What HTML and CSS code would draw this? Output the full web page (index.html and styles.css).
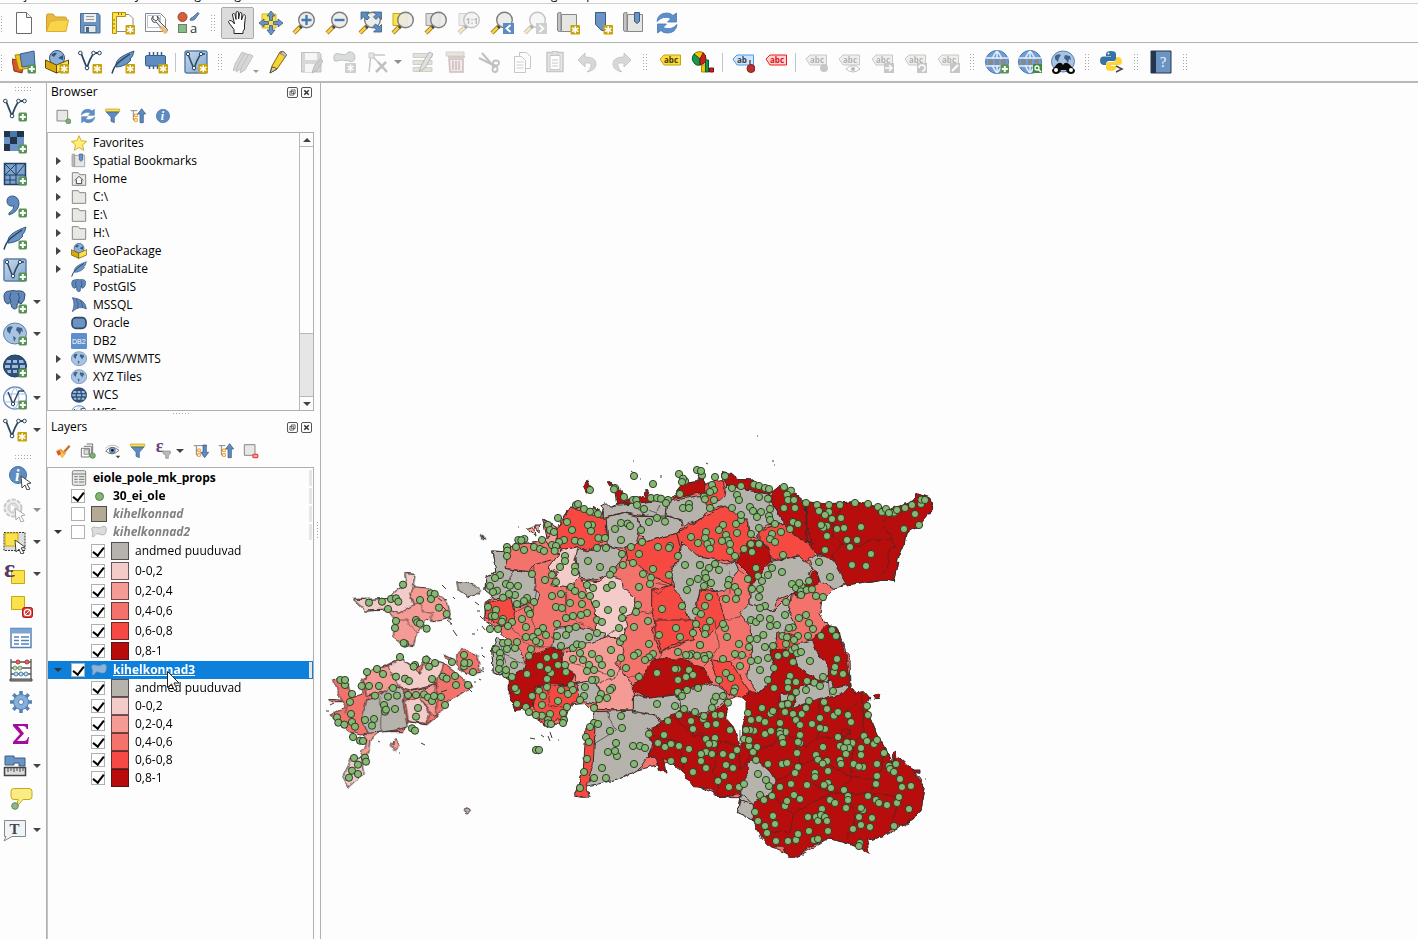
FILE: index.html
```html
<!DOCTYPE html>
<html lang="en">
<head>
<meta charset="utf-8">
<title>QGIS</title>
<link rel="stylesheet" href="styles.css">
</head>
<body>
<svg class="defs" aria-hidden="true">
<defs>
<marker id="pt" markerUnits="userSpaceOnUse" markerWidth="30" markerHeight="30" viewBox="-15 -15 30 30"><circle r="10.8" fill="#86b773" stroke="#2c3b28" stroke-width="3"/></marker>
<filter id="rough" x="-2%" y="-2%" width="104%" height="104%"><feTurbulence type="fractalNoise" baseFrequency=".13" numOctaves="2" seed="4"/><feDisplacementMap in="SourceGraphic" scale="5" xChannelSelector="R" yChannelSelector="G"/></filter>
<linearGradient id="steel" x1="0" y1="0" x2="1" y2="1"><stop offset="0" stop-color="#c7daec"/><stop offset="1" stop-color="#7fa3cc"/></linearGradient>
</defs>
</svg>
<svg class="symbols" aria-hidden="true">
<symbol id="plus" viewBox="0 0 24 24"><rect x="15.500" y="14.500" width="8.500" height="9" rx="1.500" fill="#5a9455"/><path d="M19.800 16v6M16.800 19h6" stroke="#fff" stroke-width="2"/></symbol>
<symbol id="star" viewBox="0 0 24 24"><rect x="14.500" y="14" width="9.500" height="9.500" rx="1" fill="#c8a208"/><path d="M19.200 15.300v7M16 17l6.400 3.600M22.400 17 16 20.600" stroke="#fff" stroke-width="1.600"/></symbol>
<symbol id="new" viewBox="0 0 24 24"><path d="M4.500 1.500h10l5 5v16h-15z" fill="#fff" stroke="#6b6b6b"/><path d="M14.500 1.500v5h5" fill="#eee" stroke="#6b6b6b"/></symbol>
<symbol id="open" viewBox="0 0 24 24"><path d="M1.500 20V4.500q0-1.500 1.500-1.500h5l2.500 3H20q1.500 0 1.500 2v3" fill="#e9bb3d" stroke="#c99c28"/><path d="M1.500 20.500 5 10.500l8-1.500h10.500l-2.500 11.500z" fill="#f9d44b" stroke="#d9ae34"/></symbol>
<symbol id="save" viewBox="0 0 24 24"><path d="M2.500 2.500h18l1.500 2v17.500h-19.500z" fill="#6b94c4" stroke="#4a6c94"/><path d="M6 3h12v8H6z" fill="#eef0f0"/><path d="M8 5.500h8M8 8.500h8" stroke="#999"/><path d="M6 14.500h12v7H6z" fill="#dfe6ec" stroke="#51718f"/><path d="M8 16h3v5H8z" fill="#4a6584"/></symbol>
<symbol id="layout" viewBox="0 0 24 24"><path d="M4 3.500h14l4 4v13H4z" fill="#fff" stroke="#888"/><path d="M1.500 1.500h13v4h-9v17h-4z" fill="#fbe24a" stroke="#b58f0b"/><path d="M7.500 2v2M10.500 2v2M2 9h2M2 13h2M2 17h2" stroke="#8d7314"/><use href="#star"/></symbol>
<symbol id="mgr" viewBox="0 0 24 24"><path d="M1.500 2.500h15l5 5v13h-20z" fill="#fff" stroke="#888"/><path d="M3.500 4.500h13v12h-13z" fill="none" stroke="#b5c7da"/><path d="M9 5q-3 3 0 6 2 1 3 0l8 9q2 2 3 0t-1-3l-7-7q1-4-2-5l1 3-2 2-3-2z" fill="#eee" stroke="#555"/><path d="m17 16 5.500 6" stroke="#edbb6c" stroke-width="4"/></symbol>
<symbol id="style" viewBox="0 0 24 24"><circle cx="5.500" cy="6" r="4.500" fill="#d2603c" stroke="#a84325"/><path d="M13 9q0-2 3-3l5-4.500 1 1L18 8q-2 2-5 1z" fill="#6b94c4" stroke="#4a6c94"/><rect x="1.500" y="13.500" width="8" height="8" fill="#8cb98b" stroke="#5d8a5c"/><text x="13" y="22" font-size="13" fill="#333" font-family="Open Sans">a</text></symbol>
<symbol id="hand" viewBox="0 0 24 24"><path d="M8 22.500v-4L3 12q-1-2 .5-2.500T7 11l1.500 2L6.500 4q0-1.500 1-1.500T9 3.500l1 5V2q0-1.500 1.300-1.500T12.600 2v6l1-5.500q.3-1.300 1.300-1t1 1.500l-.4 6 1.500-4.500q.6-1.200 1.600-.7t.8 1.700L18.500 14v4l-1.500 2.500v2z" fill="#fff" stroke="#222"/></symbol>
<symbol id="pan" viewBox="0 0 24 24"><path d="M3 3h14v14H3z" fill="#fbe24a" stroke="#d8b418"/><path d="M12 0 8 5h2.500v4.500h3V5H16zM12 24l-4-5h2.500v-4.500h3V19H16zM0 12l5-4v2.500h4.500v3H5V16zM24 12l-5-4v2.500h-4.500v3H19V16z" fill="#6b94c4" stroke="#385d87" stroke-width=".8"/></symbol>
<symbol id="lens" viewBox="0 0 24 24"><path d="M9 15 2 22" stroke="#8b6a1d" stroke-width="4"/><path d="M8.500 15.500 2 22" stroke="#fbd23e" stroke-width="2.500"/><path d="m8 17 2.500-3" stroke="#444" stroke-width="3"/><circle cx="14.500" cy="9" r="7.800" fill="#e9ebe8" fill-opacity=".88" stroke="#7d7d7d" stroke-width="1.400"/></symbol>
<symbol id="zin" viewBox="0 0 24 24"><use href="#lens"/><path d="M14.500 4v10M9.500 9h10" stroke="#4478b0" stroke-width="2.400"/></symbol>
<symbol id="zout" viewBox="0 0 24 24"><use href="#lens"/><path d="M9.500 9h10" stroke="#4478b0" stroke-width="2.400"/></symbol>
<symbol id="zfull" viewBox="0 0 24 24"><use href="#lens"/><path d="M3 1h8L8.500 3.500 11.500 6.500 9 9 5.500 6 3 8.500zM23.500 1h-8L18 3.500 15.500 6 18 8.500l3-3 2.500 3zM23.500 21h-8l2.500-2.500-3-3 2.500-2.500 3.500 3 2.500-2.500z" fill="#5e8cc0" stroke="#385d87" stroke-width=".8"/></symbol>
<symbol id="zsel" viewBox="0 0 24 24"><path d="M2 2.500h14v12H2z" fill="#fbe24a" stroke="#c9a619"/><use href="#lens"/></symbol>
<symbol id="zlay" viewBox="0 0 24 24"><path d="M2 2.500h14v12H2z" fill="#ddd" stroke="#999"/><use href="#lens"/></symbol>
<symbol id="znat" viewBox="0 0 24 24"><path d="M2 2.500h14v12H2z" fill="#ddd" stroke="#999"/><use href="#lens"/><text x="8.500" y="12.500" font-size="9" font-weight="700" fill="#666" font-family="Open Sans">1:1</text></symbol>
<symbol id="zlast" viewBox="0 0 24 24"><use href="#lens"/><path d="M13 12h11v11H13z" fill="#5e8cc0"/><path d="m20.500 14-4 3.500 4 3.500" fill="none" stroke="#fff" stroke-width="1.800"/></symbol>
<symbol id="znext" viewBox="0 0 24 24"><use href="#lens"/><path d="M13 12h11v11H13z" fill="#999"/><path d="m16.500 14 4 3.500-4 3.500" fill="none" stroke="#fff" stroke-width="1.800"/></symbol>
<symbol id="book" viewBox="0 0 24 24"><path d="M1.500 3q0-1.500 2-1.500H5v19H3.500q-2 0-2-1.500z" fill="#c3c3c3" stroke="#888"/><path d="M5.500 3.500h15v17h-15z" fill="#e5e5e1" stroke="#888"/><path d="M12.500 1.500h5v9l-2.500 2-2.500-2z" fill="#6b94c4" stroke="#385d87"/></symbol>
<symbol id="view" viewBox="0 0 24 24"><path d="M1.500 3q0-1.500 2-1.500H5v19H3.500q-2 0-2-1.500z" fill="#c3c3c3" stroke="#888"/><path d="M5.500 3.500h15v17h-15z" fill="#e5e5e1" stroke="#888"/><use href="#star"/></symbol>
<symbol id="bmk" viewBox="0 0 24 24"><path d="M6.500 1.500h10v18h-4l-6-6z" fill="#6b94c4" stroke="#385d87"/><use href="#star"/></symbol>
<symbol id="refresh" viewBox="0 0 24 24"><path d="M2 10.500Q3 2 12 2q4 0 6 2.500L21.500 2v9h-9L16 7.500Q8 4 2 10.500z" fill="#5e8fca" stroke="#4677ad" stroke-width=".8"/><path d="M22 13.500Q21 22 12 22q-4 0-6-2.500L2.500 22v-9h9L8 16.500q8 3.500 14-3z" fill="#5e8fca" stroke="#4677ad" stroke-width=".8"/></symbol>
<symbol id="dsm" viewBox="0 0 24 24"><path d="m0 9 12 2-2 12-8-2z" fill="#d2562a" stroke="#8c3412"/><path d="m3 5 13-1 1 14-10 2z" fill="#f2c31b" stroke="#a8830d"/><path d="m8 4 14-3 1 14-13 2z" fill="#6b94c4" stroke="#385d87"/><use href="#plus"/></symbol>
<symbol id="box" viewBox="0 0 24 24"><circle cx="12" cy="8" r="7.500" fill="#8cb0d8" stroke="#31547b"/><path d="M6 5q3-3 6-2l-3 4zM13 8l5-3v5z" fill="#31547b"/><path d="m.5 10 11 5v8L.5 18z" fill="#d9a90b" stroke="#5e4909"/><path d="m23.500 10-12 5v8l12-5z" fill="#fbe24a" stroke="#5e4909"/></symbol>
<symbol id="gpkg" viewBox="0 0 24 24"><use href="#box"/><use href="#star"/></symbol>
<symbol id="vec" viewBox="0 0 24 24"><path d="M3 3q3 8 6 15Q12 8 16 3h6" fill="none" stroke="#2b4661" stroke-width="1.800"/><g fill="#fff" stroke="#2b4661"><circle cx="2.300" cy="3" r="1.800"/><circle cx="9" cy="18" r="1.800"/><circle cx="15.500" cy="3" r="1.800"/><circle cx="21.500" cy="3" r="1.800"/></g></symbol>
<symbol id="feather" viewBox="0 0 24 24"><path d="M5 17Q4 10 12 6q5-3 11-5-1 6-4 8l1 1q-4 5-9 6-3 1-6 1z" fill="#6b94c4" stroke="#385d87"/><path d="M1 23.500Q3 16 8 12t11-8" fill="none" stroke="#28435f" stroke-width="1.500"/></symbol>
<symbol id="mem" viewBox="0 0 24 24"><path d="M5.500 2v17M9.500 2v17M13.500 2v17M17.500 2v17" stroke="#385d87" stroke-width="1.500"/><rect x="1.500" y="5.500" width="20" height="10.500" rx="1.500" fill="#5e8cc0" stroke="#385d87"/></symbol>
<symbol id="virt" viewBox="0 0 24 24"><rect x="1" y="1" width="22" height="22" rx="2" fill="url(#steel)" stroke="#5a7fa8" stroke-width="1.500"/><path d="M4 4q3 8 6 15Q13 9 17 4h4" fill="none" stroke="#2b4661" stroke-width="1.500"/><circle cx="4" cy="4" r="1.700" fill="#fff" stroke="#2b4661"/><circle cx="10" cy="18" r="1.700" fill="#fff" stroke="#2b4661"/><circle cx="17" cy="4" r="1.700" fill="#fff" stroke="#2b4661"/></symbol>
<symbol id="pencil" viewBox="0 0 24 24"><path d="M4 23 6 16 14 2q2-1.500 4 0t2.500 3L11 19z" fill="#f8d433" stroke="#7b641a"/><path d="M13.500 3.500q3 0 6 3.500l1-2.500L17 1.500z" fill="#c9ccd2" stroke="#777"/><path d="M4 23 6 17q3 0 5 2z" fill="#eac78a" stroke="#555"/></symbol>
<symbol id="pens" viewBox="0 0 24 24"><g fill="#aaa" stroke="#777"><path d="m0 21 2-7L9 2l4 2-8 14z"/><path d="m3 22 2-7 7-12 4 2-8 14z"/><path d="m7 23 2-7 7-12 4 2-8 14z"/></g></symbol>
<symbol id="sedit" viewBox="0 0 24 24"><path d="M2.500 2.500h18l1.500 2v17.500h-19.500z" fill="#aaa" stroke="#777"/><path d="M6 3h12v7H6zM6 14h9v8H6z" fill="#eee"/><path d="m13 23 2-6 6-8 3 2-6 9z" fill="#999" stroke="#666"/></symbol>
<symbol id="addf" viewBox="0 0 24 24"><path d="M2 9Q1 2 8 4t8-2q7-1 7 6-1 5-6 3-8-2-12 0-3 1-3-2z" fill="#a9bba7" stroke="#777"/><rect x="13" y="13" width="11" height="10" rx="1" fill="#999"/><path d="M18.500 14.500v7M15.500 16l6 4M21.500 16l-6 4" stroke="#fff" stroke-width="1.500"/></symbol>
<symbol id="vert" viewBox="0 0 24 24"><path d="M3 22 5 5h14M5 5l9 9" fill="none" stroke="#888" stroke-width="1.500"/><path d="M3 3h5v5H3z" fill="#ccc" stroke="#888"/><path d="m10 22 10-10M12 12l9 10" stroke="#777" stroke-width="2.500"/></symbol>
<symbol id="fields" viewBox="0 0 24 24"><path d="M2 3.500h19v4H2zM2 10.500h19v4H2zM2 17.500h19v4H2z" fill="#ccc28a" stroke="#999"/><path d="m8 22 2-6L18 2l4 2-8 14z" fill="#bbb" stroke="#666"/></symbol>
<symbol id="trash" viewBox="0 0 24 24"><path d="M2 2h18v4H2z" fill="#d2cba0" stroke="#a99"/><path d="M5 9h14v13H6zM4 7h17" fill="#f0d0cc" stroke="#b66" stroke-width="1.500"/><path d="M9 11v9M12 11v9M15 11v9" stroke="#b66" stroke-width="1.500"/></symbol>
<symbol id="cut" viewBox="0 0 24 24"><path d="m2 8 16 8M5 3l13 15" stroke="#777" stroke-width="2"/><ellipse cx="19" cy="13" rx="3" ry="2.500" fill="none" stroke="#777" stroke-width="1.800"/><ellipse cx="18" cy="19" rx="2.500" ry="3" fill="none" stroke="#777" stroke-width="1.800"/></symbol>
<symbol id="copy" viewBox="0 0 24 24"><path d="M9.500 2.500h7l4 4v12h-11z" fill="#fff" stroke="#888"/><path d="M4.500 6.500h7l4 4v12h-11z" fill="#fff" stroke="#888"/><path d="M6.500 12h7M6.500 15h7M6.500 18h7" stroke="#999"/></symbol>
<symbol id="paste" viewBox="0 0 24 24"><rect x="4" y="2.500" width="16" height="19" fill="#ccc" stroke="#888" stroke-width="1.500"/><path d="M7 5.500h10v14H7z" fill="#fff" stroke="#888"/><path d="M9 1.500h6v4H9zM9 10h6M9 13h6M9 16h6" fill="#bbb" stroke="#888"/></symbol>
<symbol id="undo" viewBox="0 0 24 24"><path d="m9 3-7 7 7 7v-4q7-1 6 3t-4 6q9-2 9-8 0-7-11-7z" fill="#aaa" stroke="#888"/></symbol>
<symbol id="redo" viewBox="0 0 24 24"><path d="m15 3 7 7-7 7v-4q-7-1-6 3t4 6q-9-2-9-8 0-7 11-7z" fill="#aaa" stroke="#888"/></symbol>
<symbol id="label" viewBox="0 0 24 24"><path d="m2 9 4-4h16.500v10H6z" fill="#fbdc3c" stroke="#c9a114"/><text x="6" y="13" font-size="8" font-weight="700" fill="#4b3b05" font-family="Open Sans">abc</text></symbol>
<symbol id="lred" viewBox="0 0 24 24"><path d="m2 9 4-4h16.500v10H6z" fill="#fbd3d3" stroke="#f01818"/><text x="6" y="13" font-size="8" font-weight="700" fill="#e01010" font-family="Open Sans">abc</text></symbol>
<symbol id="lpin" viewBox="0 0 24 24"><path d="m2 9 4-4h16.500v10H6z" fill="#cfe5fb" stroke="#4d9be6"/><text x="6" y="13" font-size="8" font-weight="700" fill="#34404d" font-family="Open Sans">ab</text><path d="M19 10v6" stroke="#777" stroke-width="2"/><circle cx="20" cy="18.500" r="4" fill="#b83330" stroke="#8d1f1c"/></symbol>
<symbol id="lgray" viewBox="0 0 24 24"><path d="m2 9 4-4h16.500v10H6z" fill="#dcdcd2" stroke="#888"/><text x="6" y="13" font-size="8" font-weight="700" fill="#555" font-family="Open Sans">abc</text></symbol>
<symbol id="diag" viewBox="0 0 24 24"><path d="M9 9 3 4q4-4 10-1z" fill="#f7c600" stroke="#8a6d00"/><path d="M9 9 3 4q-4 5 1 10 2 2 5 1z" fill="#18964a" stroke="#0b5a29"/><path d="M9 9v6q6-1 6-6t-3-6z" fill="#c8201c" stroke="#7d100e"/><path d="M10.500 15h4v7h-4z" fill="#f7c600" stroke="#a88800"/><path d="M14.500 10h3v12h-3z" fill="#18964a" stroke="#0b5a29"/><path d="M18.500 18h4v4h-4z" fill="#c8201c" stroke="#7d100e"/></symbol>
<symbol id="globe" viewBox="0 0 24 24"><circle cx="12" cy="12" r="11.500" fill="#6d9fdb" stroke="#4b77ad"/><path d="M1 8h22M1 16h22M12 1v22M12 1q-10 11 0 22M12 1q10 11 0 22" fill="none" stroke="#e7eef5" stroke-width="1.500"/><path d="M3 9h5v6H3zM10 9h4v6h-4zM16 9h5v6h-5z" fill="#888b8e"/></symbol>
<symbol id="gsearch" viewBox="0 0 24 24"><use href="#globe"/><path d="M15 14h9v9h-9z" fill="#3f8a3d"/><circle cx="19" cy="18" r="2" fill="none" stroke="#fff" stroke-width="1.300"/><path d="m20.500 19.500 2.500 2.500" stroke="#fff" stroke-width="1.500"/></symbol>
<symbol id="wms" viewBox="0 0 24 24"><ellipse cx="12" cy="11.500" rx="11.500" ry="10.500" fill="#a9c4e2" stroke="#5a7fa8"/><path d="M4 6q3-3 6-1l-2 3-1 4-3-3zM14 5l5 1 1 4-2-1-1 4-2-3-2-2zM10 14l3 2-2 4z" fill="#3f618a"/></symbol>
<symbol id="binoc" viewBox="0 0 24 24"><use href="#wms"/><path d="M6 14q4-3 6 1 2-4 6-1l6 6q0 4-4 4t-5-4h-5q-1 4-5 4t-4-4z" fill="#0a0a0a"/><circle cx="5" cy="20" r="2" fill="#fff"/><circle cx="20" cy="20" r="2" fill="#fff"/></symbol>
<symbol id="py" viewBox="0 0 24 24"><path d="M6 6V4q0-3 5-3t5 3v5q0 2-3 2H9q-3 0-3 4H3q-3-1-3-4.500T3 6.500h8V6z" fill="#3572a5"/><path d="M16 7h3q3 1 3 4.500T19 15h-8v1h5v2q0 3-5 3t-5-3v-3q0-3 3-3h4q3 0 3-4z" fill="#ffd43b"/><circle cx="8.500" cy="3.500" r="1" fill="#fff"/><path d="m16 16 6 3-6 3" fill="none" stroke="#444" stroke-width="1.500"/></symbol>
<symbol id="help" viewBox="0 0 24 24"><path d="M2 1h20v22H2z" fill="#6b94c4" stroke="#23384f"/><path d="M2 1h5v22H2z" fill="#23384f"/><text x="11" y="17" font-size="14" fill="#fff" font-family="Liberation Serif">?</text></symbol>
<symbol id="raster" viewBox="0 0 24 24"><path d="M1 1h20v20H1z" fill="#6b94c4"/><path d="M1 1h6v6H1zM14 1h7v6h-7zM7 7h7v7H7zM1 14h6v7H1z" fill="#20344a"/><path d="M7 1h7v6H7z" fill="#4a77ab"/></symbol>
<symbol id="mesh" viewBox="0 0 24 24"><path d="M1.500 1.500h21v21h-21z" fill="#7da3d0" stroke="#23415f" stroke-width="1.500"/><path d="M1 13h22M13 1v22M2 2l11 11M13 2 2 13M13 13 22 2M1 18h12M7 13v10" stroke="#23415f" fill="none"/></symbol>
<symbol id="comma" viewBox="0 0 24 24"><path d="M4 7q0-5 6-5 6 1 6 8-1 8-10 11v-2q5-3 5-7-7 1-7-5z" fill="#5e8cc0" stroke="#385d87"/></symbol>
<symbol id="eleph" viewBox="0 0 24 24"><path d="M1 6q0-5 6-5 3-1 6 0 9-1 9 4 0 6-4 9-2 0-2-3-1 3-2 4 1 4-3 4-3-1-3-5-1 0-1-2-1 2-2 2-4-1-4-8z" fill="#6088b8" stroke="#2f507a"/><path d="M8 3q-3 4 0 9M15 3q3 4 0 9" fill="none" stroke="#2f507a"/></symbol>
<symbol id="dglobe" viewBox="0 0 24 24"><ellipse cx="12" cy="12" rx="11.500" ry="11" fill="#2f507a" stroke="#23415f"/><path d="M4 6h4v3H3zM10 6h4v3h-4zM16 6h4l1 3h-5zM2 11h5v3H2zM9 11h6v3H9zM17 11h5v3h-5zM4 16h4v3H5zM10 16h4v3h-4zM16 16h4v3h-4z" fill="#9bbbdd"/></symbol>
<symbol id="wfs" viewBox="0 0 24 24"><ellipse cx="12" cy="12" rx="11.500" ry="11" fill="#fff" stroke="#6b94c4" stroke-width="1.500"/><path d="M1 8h22M1 16h22M12 1q-8 11 0 22M12 1q8 11 0 22" fill="none" stroke="#a3bfdf"/><path d="m5 6 5 12 6-13h5" fill="none" stroke="#2b4661" stroke-width="1.500"/><circle cx="10" cy="18" r="1.700" fill="#fff" stroke="#2b4661"/></symbol>
<symbol id="arrow" viewBox="0 0 24 24"><path d="m12 10 10 7-4 1 3 5-3 1-2-5-3 3z" fill="#fff" stroke="#444"/></symbol>
<symbol id="info" viewBox="0 0 24 24"><circle cx="9" cy="9" r="8.500" fill="#5e8cc0" stroke="#4273a9"/><text x="6" y="15" font-size="16" font-style="italic" font-weight="700" fill="#fff" font-family="Liberation Serif">i</text><use href="#arrow"/></symbol>
<symbol id="inf" viewBox="0 0 24 24"><circle cx="12" cy="12" r="10" fill="#5e8cc0" stroke="#4273a9"/><text x="8.500" y="18.500" font-size="18" font-style="italic" font-weight="700" fill="#fff" font-family="Liberation Serif">i</text></symbol>
<symbol id="gear" viewBox="0 0 24 24"><path d="M12 1v22M1 12h22M4.300 4.300l15.400 15.400M19.700 4.300 4.300 19.700" stroke="#5582b5" stroke-width="3.600"/><circle cx="12" cy="12" r="7.500" fill="#86aedb" stroke="#5582b5"/><circle cx="12" cy="12" r="2.500" fill="#fff" stroke="#5582b5"/></symbol>
<symbol id="action" viewBox="0 0 24 24"><circle cx="10" cy="10" r="8.500" fill="#ddd" stroke="#888" stroke-width="2" stroke-dasharray="4 1.500"/><circle cx="10" cy="10" r="5" fill="#bbb" stroke="#888"/><path d="m8 7 5 3-5 3z" fill="#fff"/><use href="#arrow"/></symbol>
<symbol id="sel" viewBox="0 0 24 24"><path d="M1 2.500h21v18H1z" fill="#ddd" stroke="#333" stroke-dasharray="2 1"/><path d="M2 3h13v13H2z" fill="#fbe24a" stroke="#c9a619"/><use href="#arrow"/></symbol>
<symbol id="eps" viewBox="0 0 24 24"><path d="M8.500 8.500h13v13h-13z" fill="#fbe24a" stroke="#c9a619"/><text x="1" y="15" font-size="26" font-weight="700" fill="#5a3a66" font-family="Liberation Serif">ε</text></symbol>
<symbol id="desel" viewBox="0 0 24 24"><path d="M2.500 2.500h13v13h-13z" fill="#fbe24a" stroke="#c9a619"/><rect x="13.500" y="13.500" width="10" height="10" rx="2" fill="#e03a34" stroke="#a51b17"/><circle cx="18.500" cy="18.500" r="3.200" fill="none" stroke="#fff" stroke-width="1.300"/><path d="m16 21 5-5" stroke="#fff"/></symbol>
<symbol id="table" viewBox="0 0 24 24"><path d="M2 2.500h20v19H2z" fill="#fff" stroke="#5582b5" stroke-width="1.500"/><path d="M2 2.500h20v5H2z" fill="#7ea5d2"/><path d="M5 11h5M12 11h8M5 14.500h5M12 14.500h8M5 18h5M12 18h8" stroke="#5582b5" stroke-width="1.500"/></symbol>
<symbol id="abacus" viewBox="0 0 24 24"><path d="M2 1v20M22 1v20M2 4h20M2 10h20M2 16h20" stroke="#555" stroke-width="1.300"/><path d="M1 21h22v2H1z" fill="#999" stroke="#444"/><g fill="#e66b62" stroke="#a33"><circle cx="9" cy="4" r="2"/><circle cx="18" cy="4" r="2"/></g><g fill="#bcd9b4" stroke="#6a9a62"><circle cx="6" cy="10" r="2"/><circle cx="11" cy="10" r="2"/></g><g fill="#c4dcef" stroke="#5582a5"><circle cx="7" cy="16" r="2"/><circle cx="12" cy="16" r="2"/><circle cx="17" cy="16" r="2"/></g></symbol>
<symbol id="sigma" viewBox="0 0 24 24"><path d="M4 2h15v5h-1.500q0-3-4-3H9l6 7.500L8 19h7q3 0 4-4h1l-1 7H4v-2l7-8-7-8z" fill="#a30c9d"/></symbol>
<symbol id="ruler" viewBox="0 0 24 24"><path d="M2 2h9v2h11v8h-6V9h-5v2H2z" fill="#6b94c4" stroke="#385d87"/><path d="M1.500 13.500h21v8h-21z" fill="#ddd" stroke="#444" stroke-width="1.500"/><path d="M5 14v4M8 14v3M11 14v4M14 14v3M17 14v4M20 14v3" stroke="#444"/></symbol>
<symbol id="tip" viewBox="0 0 24 24"><path d="M5 2.500h15q3 0 3 3v5q0 3-3 3h-6l-6 7 1-7H5q-3 0-3-3v-5q0-3 3-3z" fill="#faec84" stroke="#c9a619"/><circle cx="6" cy="20" r="3.300" fill="#8cb98b" stroke="#5d8a5c"/></symbol>
<symbol id="tann" viewBox="0 0 24 24"><path d="M1.500 2.500h21v16H9l-8 4.500 2-4.500H1.500z" fill="#eef4f8" stroke="#888"/><text x="6.500" y="15.500" font-size="15" font-weight="700" fill="#444" font-family="Liberation Serif">T</text></symbol>
<symbol id="addl" viewBox="0 0 24 24"><path d="M3 3.500h16v16H3z" fill="#e7e7e3" stroke="#888" stroke-width="1.500"/><circle cx="20" cy="20" r="3.800" fill="#7fae76" stroke="#4d7c46"/></symbol>
<symbol id="reml" viewBox="0 0 24 24"><path d="M2 2.500h16v16H2z" fill="#e7e7e3" stroke="#888" stroke-width="1.500"/><rect x="14" y="16" width="9" height="7" rx="2" fill="#ea4a4a"/><path d="M16 19.500h5" stroke="#fff" stroke-width="1.500"/></symbol>
<symbol id="filter" viewBox="0 0 24 24"><path d="M1 1.500h21v4H1z" fill="#fbe24a" stroke="#b99818"/><path d="M2 6h19l-7 8v8l-5-2v-6z" fill="#5e8cc0" stroke="#385d87"/></symbol>
<symbol id="coll" viewBox="0 0 24 24"><path d="M1 4h10M5 4v14M5 11h4M5 18h4" fill="none" stroke="#888" stroke-width="1.500"/><path d="M7 9h4v4H7zM7 16h4v4H7z" fill="#fff" stroke="#f09a1f" stroke-width="1.500"/><path d="m17.500 1 6 8H20v13h-5V9h-3.500z" fill="#5e8cc0" stroke="#2f507a"/></symbol>
<symbol id="expd" viewBox="0 0 24 24"><path d="M1 4h20M5 4v14M5 11h4M5 18h4" fill="none" stroke="#888" stroke-width="1.500"/><path d="M7 9h4v4H7zM7 16h4v4H7z" fill="#fff" stroke="#f09a1f" stroke-width="1.500"/><path d="m17.500 22 6-8H20V3h-5v11h-3.500z" fill="#5e8cc0" stroke="#2f507a"/></symbol>
<symbol id="brush" viewBox="0 0 24 24"><path d="m2 12 6-3 8 6-5 7z" fill="#f8c93c" stroke="#e0a23a"/><path d="m2 13 5-2 2 5-4 3z" fill="#e0503a"/><path d="m14 13 8-9" stroke="#c3722b" stroke-width="3.500"/><path d="m8 10 7 6" stroke="#e9a04a" stroke-width="3"/></symbol>
<symbol id="grp" viewBox="0 0 24 24"><path d="M2 8h12v13H2zM6 5h11v12M10 1.500h9v14" fill="none" stroke="#777" stroke-width="1.500"/><path d="M6 17V10h7v7z" fill="#ddd" stroke="#777"/><circle cx="19" cy="19" r="4" fill="#7fae76" stroke="#4d7c46"/></symbol>
<symbol id="eye" viewBox="0 0 24 24"><path d="M1 12Q10 2 21 11q-10 10-20 1z" fill="#fff" stroke="#777" stroke-width="1.500"/><circle cx="11" cy="11" r="4.500" fill="#7fa3cc" stroke="#31547b"/><circle cx="11" cy="11" r="2" fill="#111"/><path d="M1 8Q10-1 21 7" fill="none" stroke="#999"/><path d="M16 19h7l-3.500 4z" fill="#444"/></symbol>
<symbol id="efil" viewBox="0 0 24 24"><text x="1" y="14" font-size="27" font-weight="700" fill="#6b4478" font-family="Liberation Serif">ε</text><path d="M12 12h11v4l-3 2v5h-4v-5l-4-2z" fill="#bbb" stroke="#888"/></symbol>
<symbol id="fav" viewBox="0 0 24 24"><path d="m12 1 3.300 7.700 8.200.8-6.200 5.400 1.900 8.100-7.200-4.200L4.800 23l1.900-8.100L.5 9.500l8.200-.8z" fill="#fdf07a" stroke="#c9a619" stroke-width="1.300"/></symbol>
<symbol id="dir" viewBox="0 0 24 24"><path d="M2 21.500v-19h9l2 3h9v16z" fill="#e8e8e5" stroke="#888" stroke-width="1.500"/></symbol>
<symbol id="home" viewBox="0 0 24 24"><use href="#dir"/><path d="m6 14 6-6 6 6M8 13v6h8v-6" fill="#fff" stroke="#444" stroke-width="1.500"/></symbol>
<symbol id="mssql" viewBox="0 0 24 24"><path d="M2 1q20 2 21 17-10-6-21 4 5-12 0-21z" fill="#6088b8" stroke="#2f507a"/><path d="M8 3q4 7 2 14M14 5q4 6 3 11" fill="none" stroke="#2f507a"/></symbol>
<symbol id="ora" viewBox="0 0 24 24"><rect x="1.500" y="4" width="21" height="16" rx="6" fill="#6b94c4" stroke="#2f4a68" stroke-width="2.500"/></symbol>
<symbol id="db2" viewBox="0 0 24 24"><rect x="0" y="0" width="24" height="24" rx="2" fill="#5e8fca"/><text x="1.500" y="16" font-size="10.500" fill="#fff" font-family="Liberation Sans">DB2</text></symbol>
<symbol id="tbl" viewBox="0 0 24 24"><rect x="2" y="1" width="20" height="22" rx="2" fill="#e8e8e5" stroke="#888" stroke-width="1.500"/><path d="M2 6h20M5 10h5M12 10h8M5 14h5M12 14h8M5 18h5M12 18h8" stroke="#777" stroke-width="1.500"/></symbol>
<symbol id="poly" viewBox="0 0 24 24"><path d="M2 18Q4 13 1 8q0-5 6-3t10-1q6-2 6 4t-3 8q-4 1-8-1t-6 2q-4 4-4 1z" fill="currentColor" stroke="#999"/></symbol>
</svg>

<nav class="menubar" aria-label="Main menu"><button>Project</button><button>Edit</button><button>View</button><button>Layer</button><button>Settings</button><button>Plugins</button><button>Vector</button><button>Raster</button><button>Database</button><button>Web</button><button>Mesh</button><button>Processing</button><button>Help</button></nav>

<div class="toolbar" role="toolbar" aria-label="Project and navigation">
<button aria-label="New project"><svg><use href="#new"/></svg></button><button aria-label="Open project"><svg><use href="#open"/></svg></button><button aria-label="Save project"><svg><use href="#save"/></svg></button><button aria-label="New print layout"><svg><use href="#layout"/></svg></button><button aria-label="Layout manager"><svg><use href="#mgr"/></svg></button><button aria-label="Style manager"><svg><use href="#style"/></svg></button>
<i class="grip"></i>
<button class="pressed" aria-label="Pan map"><svg><use href="#hand"/></svg></button><button aria-label="Pan to selection"><svg><use href="#pan"/></svg></button><button aria-label="Zoom in"><svg><use href="#zin"/></svg></button><button aria-label="Zoom out"><svg><use href="#zout"/></svg></button><button aria-label="Zoom full"><svg><use href="#zfull"/></svg></button><button aria-label="Zoom to selection"><svg><use href="#zsel"/></svg></button><button aria-label="Zoom to layer"><svg><use href="#zlay"/></svg></button><button class="off" aria-label="Zoom to native resolution"><svg><use href="#znat"/></svg></button><button aria-label="Zoom last"><svg><use href="#zlast"/></svg></button><button class="off" aria-label="Zoom next"><svg><use href="#znext"/></svg></button><button aria-label="New map view"><svg><use href="#view"/></svg></button><button aria-label="New bookmark"><svg><use href="#bmk"/></svg></button><button aria-label="Show bookmarks"><svg><use href="#book"/></svg></button><button aria-label="Refresh"><svg><use href="#refresh"/></svg></button>
</div>

<div class="toolbar second" role="toolbar" aria-label="Layers and editing">
<button aria-label="Data source manager"><svg><use href="#dsm"/></svg></button><button aria-label="New GeoPackage layer"><svg><use href="#gpkg"/></svg></button><button aria-label="New shapefile layer"><svg><use href="#vec"/><use href="#star"/></svg></button><button aria-label="New SpatiaLite layer"><svg><use href="#feather"/><use href="#star"/></svg></button><button aria-label="New temporary layer"><svg><use href="#mem"/><use href="#star"/></svg></button>
<i class="sep"></i>
<button aria-label="New virtual layer"><svg><use href="#virt"/><use href="#star"/></svg></button>
<i class="grip"></i>
<button class="off drop-in" aria-label="Current edits"><svg><use href="#pens"/></svg></button><button aria-label="Toggle editing"><svg><use href="#pencil"/></svg></button><button class="off" aria-label="Save edits"><svg><use href="#sedit"/></svg></button><button class="off" aria-label="Add feature"><svg><use href="#addf"/></svg></button><button class="off wide" aria-label="Vertex tool"><svg><use href="#vert"/></svg><i class="down"></i></button><button class="off" aria-label="Modify attributes"><svg><use href="#fields"/></svg></button><button class="off" aria-label="Delete selected"><svg><use href="#trash"/></svg></button><button class="off" aria-label="Cut"><svg><use href="#cut"/></svg></button><button class="off" aria-label="Copy"><svg><use href="#copy"/></svg></button><button class="off" aria-label="Paste"><svg><use href="#paste"/></svg></button><button class="off" aria-label="Undo"><svg><use href="#undo"/></svg></button><button class="off" aria-label="Redo"><svg><use href="#redo"/></svg></button>
<i class="grip"></i>
<button aria-label="Layer labeling"><svg><use href="#label"/></svg></button><button aria-label="Layer diagram"><svg><use href="#diag"/></svg></button>
<i class="sep"></i>
<button aria-label="Highlight pinned labels"><svg><use href="#lpin"/></svg></button><button aria-label="Unplaced labels"><svg><use href="#lred"/></svg></button>
<i class="sep"></i>
<button class="off" aria-label="Pin labels"><svg><use href="#lgray"/><circle cx="20" cy="18" r="4" fill="#888"/></svg></button><button class="off" aria-label="Show labels"><svg><use href="#lgray"/><path d="M9 19q7-7 14 0-7 6-14 0z" fill="#fff" stroke="#777"/><circle cx="16" cy="19" r="2" fill="#666"/></svg></button><button class="off" aria-label="Move label"><svg><use href="#lgray"/><rect x="14" y="13" width="10" height="10" fill="#888"/><path d="M15 18h7m-3-3 3 3-3 3" fill="none" stroke="#fff" stroke-width="1.500"/></svg></button><button class="off" aria-label="Rotate label"><svg><use href="#lgray"/><rect x="14" y="13" width="10" height="10" fill="#888"/><path d="M16 18q0-3 3-3t3 3-3 3" fill="none" stroke="#fff" stroke-width="1.500"/></svg></button><button class="off" aria-label="Change label"><svg><use href="#lgray"/><rect x="14" y="13" width="10" height="10" fill="#888"/><path d="m16 21 6-6" stroke="#fff" stroke-width="2"/></svg></button>
<i class="grip"></i>
<button aria-label="Add basemap"><svg><use href="#globe"/><use href="#plus"/></svg></button><button aria-label="Search services"><svg><use href="#gsearch"/></svg></button><button aria-label="Metasearch"><svg><use href="#binoc"/></svg></button>
<i class="grip"></i>
<button aria-label="Python console"><svg><use href="#py"/></svg></button>
<i class="grip"></i>
<button aria-label="Help contents"><svg><use href="#help"/></svg></button>
<i class="grip"></i>
</div>

<div class="workspace">
<div class="sidebar" role="toolbar" aria-label="Manage layers and attributes" aria-orientation="vertical">
<i class="hgrip first"></i>
<button aria-label="Add vector layer"><svg><use href="#vec"/><use href="#plus"/></svg></button>
<button aria-label="Add raster layer"><svg><use href="#raster"/><use href="#plus"/></svg></button>
<button aria-label="Add mesh layer"><svg><use href="#mesh"/><use href="#plus"/></svg></button>
<button aria-label="Add delimited text layer"><svg><use href="#comma"/><use href="#plus"/></svg></button>
<button aria-label="Add SpatiaLite layer"><svg><use href="#feather"/><use href="#plus"/></svg></button>
<button aria-label="Add virtual layer"><svg><use href="#virt"/><use href="#plus"/></svg></button>
<button aria-label="Add PostGIS layer"><svg><use href="#eleph"/><use href="#plus"/></svg><i class="down"></i></button>
<button aria-label="Add WMS layer"><svg><use href="#wms"/><use href="#plus"/></svg><i class="down"></i></button>
<button aria-label="Add WCS layer"><svg><use href="#dglobe"/><use href="#plus"/></svg></button>
<button aria-label="Add WFS layer"><svg><use href="#wfs"/><use href="#plus"/></svg><i class="down"></i></button>
<button aria-label="New layer"><svg><use href="#vec"/><use href="#star"/></svg><i class="down"></i></button>
<i class="hgrip"></i>
<button class="mid" aria-label="Identify features"><svg><use href="#info"/></svg></button>
<button class="off" aria-label="Run feature action"><svg><use href="#action"/></svg><i class="down"></i></button>
<button aria-label="Select features"><svg><use href="#sel"/></svg><i class="down"></i></button>
<button aria-label="Select by expression"><svg><use href="#eps"/></svg><i class="down"></i></button>
<button class="mid" aria-label="Deselect features"><svg><use href="#desel"/></svg></button>
<button class="mid" aria-label="Open attribute table"><svg><use href="#table"/></svg></button>
<button class="mid" aria-label="Field calculator"><svg><use href="#abacus"/></svg></button>
<button class="mid" aria-label="Processing toolbox"><svg><use href="#gear"/></svg></button>
<button class="mid" aria-label="Statistics"><svg><use href="#sigma"/></svg></button>
<button aria-label="Measure line"><svg><use href="#ruler"/></svg><i class="down"></i></button>
<button class="mid" aria-label="Map tips"><svg><use href="#tip"/></svg></button>
<button aria-label="Text annotation"><svg><use href="#tann"/></svg><i class="down"></i></button>
</div>

<div class="docks">
<section class="panel browser">
<header><h2>Browser</h2><button class="wb" aria-label="Float panel"><svg viewBox="0 0 12 12"><path d="M4.500 2.500h5v5h-5zM2.500 4.500h5v5h-5z" fill="#fff" stroke="#444"/></svg></button><button class="wb" aria-label="Close panel"><svg viewBox="0 0 12 12"><path d="m3 3 6 6M9 3 3 9" stroke="#333" stroke-width="2"/></svg></button></header>
<div class="ptools"><button aria-label="Add selected layers"><svg><use href="#addl"/></svg></button><button aria-label="Refresh browser"><svg><use href="#refresh"/></svg></button><button aria-label="Filter browser"><svg><use href="#filter"/></svg></button><button aria-label="Collapse all"><svg><use href="#coll"/></svg></button><button aria-label="Properties"><svg><use href="#inf"/></svg></button></div>
<div class="box scroller">
<ul class="tree">
<li><i class="tw"></i><svg><use href="#fav"/></svg>Favorites</li>
<li><i class="tw shut"></i><svg><use href="#book"/></svg>Spatial Bookmarks</li>
<li><i class="tw shut"></i><svg><use href="#home"/></svg>Home</li>
<li><i class="tw shut"></i><svg><use href="#dir"/></svg>C:\</li>
<li><i class="tw shut"></i><svg><use href="#dir"/></svg>E:\</li>
<li><i class="tw shut"></i><svg><use href="#dir"/></svg>H:\</li>
<li><i class="tw shut"></i><svg><use href="#box"/></svg>GeoPackage</li>
<li><i class="tw shut"></i><svg><use href="#feather"/></svg>SpatiaLite</li>
<li><i class="tw"></i><svg><use href="#eleph"/></svg>PostGIS</li>
<li><i class="tw"></i><svg><use href="#mssql"/></svg>MSSQL</li>
<li><i class="tw"></i><svg><use href="#ora"/></svg>Oracle</li>
<li><i class="tw"></i><svg><use href="#db2"/></svg>DB2</li>
<li><i class="tw shut"></i><svg><use href="#wms"/></svg>WMS/WMTS</li>
<li><i class="tw shut"></i><svg><use href="#wms"/></svg>XYZ Tiles</li>
<li><i class="tw"></i><svg><use href="#dglobe"/></svg>WCS</li>
<li><i class="tw"></i><svg><use href="#wfs"/></svg>WFS</li>
</ul>
<div class="bar"><button aria-label="Scroll up"><i class="up"></i></button><span class="track"></span><span class="thumb"></span><button aria-label="Scroll down"><i class="down"></i></button></div>
</div>
</section>
<i class="splitter"></i>
<section class="panel layers">
<header><h2>Layers</h2><button class="wb" aria-label="Float panel"><svg viewBox="0 0 12 12"><path d="M4.500 2.500h5v5h-5zM2.500 4.500h5v5h-5z" fill="#fff" stroke="#444"/></svg></button><button class="wb" aria-label="Close panel"><svg viewBox="0 0 12 12"><path d="m3 3 6 6M9 3 3 9" stroke="#333" stroke-width="2"/></svg></button></header>
<div class="ptools"><button aria-label="Open layer styling"><svg><use href="#brush"/></svg></button><button aria-label="Add group"><svg><use href="#grp"/></svg></button><button aria-label="Manage map themes"><svg><use href="#eye"/></svg></button><button aria-label="Filter legend"><svg><use href="#filter"/></svg></button><button class="more" aria-label="Filter by expression"><svg><use href="#efil"/></svg><i class="down"></i></button><button aria-label="Expand all"><svg><use href="#expd"/></svg></button><button aria-label="Collapse all"><svg><use href="#coll"/></svg></button><button aria-label="Remove layer"><svg><use href="#reml"/></svg></button></div>
<div class="box legend">
<ul class="tree">
<li class="bar-end"><i class="tw"></i><svg><use href="#tbl"/></svg><b>eiole_pole_mk_props</b></li>
<li class="bar-end"><i class="tw"></i><label><input type="checkbox" checked><i class="point"></i><b>30_ei_ole</b></label></li>
<li class="bar-end hidden-layer"><i class="tw"></i><label><input type="checkbox"><i class="sw tan"></i>kihelkonnad</label></li>
<li class="bar-end hidden-layer"><i class="tw opened"></i><label><input type="checkbox"><svg class="pale"><use href="#poly"/></svg>kihelkonnad2</label></li>
</ul>
<ul class="tree classes tall">
<li><label><input type="checkbox" checked><i class="sw c0"></i>andmed puuduvad</label></li>
<li><label><input type="checkbox" checked><i class="sw c1"></i>0-0,2</label></li>
<li><label><input type="checkbox" checked><i class="sw c2"></i>0,2-0,4</label></li>
<li><label><input type="checkbox" checked><i class="sw c3"></i>0,4-0,6</label></li>
<li><label><input type="checkbox" checked><i class="sw c4"></i>0,6-0,8</label></li>
<li><label><input type="checkbox" checked><i class="sw c5"></i>0,8-1</label></li>
</ul>
<ul class="tree">
<li class="bar-end current"><i class="tw opened"></i><label><input type="checkbox" checked><svg class="blue"><use href="#poly"/></svg><b>kihelkonnad3</b></label><svg class="cursor" viewBox="0 0 12 20"><path d="M.5.500v16l4-3.500 3 6.500 2.500-1.200-3-6.300h5z" fill="#fff" stroke="#222"/></svg></li>
</ul>
<ul class="tree classes">
<li><label><input type="checkbox" checked><i class="sw c0"></i>andmed puuduvad</label></li>
<li><label><input type="checkbox" checked><i class="sw c1"></i>0-0,2</label></li>
<li><label><input type="checkbox" checked><i class="sw c2"></i>0,2-0,4</label></li>
<li><label><input type="checkbox" checked><i class="sw c3"></i>0,4-0,6</label></li>
<li><label><input type="checkbox" checked><i class="sw c4"></i>0,6-0,8</label></li>
<li><label><input type="checkbox" checked><i class="sw c5"></i>0,8-1</label></li>
</ul>
</div>
</section>
</div>
<i class="vsplit"></i>

<main class="canvas">
<svg class="map" viewBox="321 83 1097 856" role="img" aria-label="Map of parishes with points">
<g filter="url(#rough)" class="regions">
<g transform="translate(470 430) scale(.33333)">
<path class="c3" d="M65 360 100 362 130 345 200 335 235 340 218 268 262 290 300 235 325 225 345 245 395 262 400 235 392 225 420 232 445 222 432 175 455 185 465 215 500 222 510 200 530 215 560 205 600 210 640 160 680 155 685 135 700 150 715 180 755 155 755 125 782 130 800 148 845 150 905 185 930 165 950 180 980 195 1005 215 1070 222 1155 215 1200 225 1250 240 1300 232 1330 215 1338 190 1380 205 1389 240 1370 260 1345 290 1308 310 1302 345 1285 385 1270 455 1235 448 1130 465 1095 475 1055 515 1050 550 1065 580 1100 590 1140 690 1143 770 1155 790 1180 785 1198 805 1185 830 1220 910 1265 995 1330 1020 1365 1075 1355 1130 1330 1170 1240 1220 1190 1230 1160 1250 1080 1225 980 1282 900 1250 850 1170 802 1148 810 1100 750 1100 690 1070 600 995 505 1020 460 1042 340 1070 338 1102 313 1098 340 1020 350 940 348 895 372 875 372 845 350 820 300 825 285 870 235 895 160 835 135 840 118 800 118 750 70 725 65 655 110 630 90 600 45 570 45 520 75 500 45 480 48 440 78 425z"/>
<path class="c0" d="M65 360 100 362 112 385 105 415 130 420 175 425 195 435 195 480 210 490 205 510 150 530 128 510 75 505 45 480 48 440 78 425zM315 355 350 365 405 345 440 355 465 370 450 395 420 430 375 450 335 445 320 400zM408 262 460 248 505 260 510 290 500 340 465 355 415 350zM400 235 392 225 405 218 420 232 450 225 500 222 560 215 595 215 590 245 585 265 505 255 460 248 400 262zM505 260 590 258 635 270 640 290 620 310 530 335 510 310zM590 215 700 195 720 230 700 262 640 290 635 270 585 255z"/>
<path class="c3" d="M112 385 105 415 175 425 190 405 260 385 275 375 250 365 230 335 200 335 130 345 110 360z"/>
<path class="c2" d="M218 268 262 295 262 330 275 375 250 365 225 330 240 310zM170 295 190 290 195 315 185 312zM195 285 208 285 208 305 198 300z"/>
<path class="c4" d="M60 515 125 505 135 545 125 580 90 590 45 560 50 520zM262 300 300 235 345 245 398 262 410 270 408 330 350 365 325 350 275 360 262 330zM465 355 500 340 530 335 620 310 635 340 630 390 605 410 610 430 605 465 545 440 500 400 470 390zM545 480 605 465 650 515 650 550 675 580 640 640 570 670 545 600 555 580 545 540z"/>
<path class="c1" d="M275 360 325 350 315 390 330 440 300 475 245 465 265 430 235 410zM335 450 385 455 410 435 455 445 460 475 495 500 490 550 465 560 470 590 455 625 410 620 380 600 375 540 350 480z"/>
<path class="c5" d="M342 172 350 148 362 178 350 188zM414 156 425 154 424 164 416 164zM432 170 442 170 455 180 470 210 500 197 525 205 528 180 540 198 540 215 500 222 440 222zM610 205 640 160 685 155 688 130 705 160 710 185 640 200zM370 230 385 240 380 250z"/>
<path class="ln" d="M130 420 110 460 128 510M190 405 200 480 185 570 200 600M290 470 290 560 380 600M420 440 455 400 470 390M490 545 520 545 545 550M560 460 590 465 570 490 545 480M500 222 520 255M540 240 560 250 570 225M185 520 130 550"/>
</g>
<g transform="translate(700 430) scale(.33333)">
<path class="c4" d="M20 160 70 150 75 190 70 210 20 225 10 195zM-70 310 10 262 75 228 140 265 155 340 105 400 45 385 -10 378 -60 345zM0 480 50 485 60 520 75 570 20 620 -20 580zM180 300 250 280 300 330 345 345 340 375 320 395 300 378 215 390 205 350 180 330z"/>
<path class="c0" d="M80 165 140 180 205 192 215 215 250 280 200 285 180 300 175 325 150 320 145 265 130 262 75 228 45 235 20 225 75 200zM-55 335 -10 378 45 385 75 405 105 390 115 420 75 480 50 485 20 470 0 480 -10 520 -15 570 -25 580 -50 515 -75 480 -85 425 -60 380zM210 395 300 378 335 415 325 430 330 455 280 490 230 510 220 545 150 520 150 475 165 450zM325 385 350 372 395 385 440 460 405 475 360 455 350 425 335 415z"/>
<path class="c5" d="M65 125 92 130 110 148 155 150 215 185 205 192 140 180 80 165zM215 185 240 165 290 195 320 225 320 290 340 345 300 330 250 275 215 215zM315 215 380 222 465 215 560 240 640 215 648 190 690 205 699 240 680 260 655 290 618 310 612 345 595 385 580 455 545 448 440 465 400 395 375 375 340 365 320 330 320 290zM180 330 210 360 210 400 165 450 150 470 145 430 110 395 125 365 150 335zM335 425 350 425 358 455 320 490 290 505 280 490 325 460z"/>
<path class="ln" d="M430 230 400 265 400 320 425 340 400 370 400 395M425 340 480 350 510 330 580 328 545 280 555 265 615 235M580 328 585 350 565 360 562 420 545 430M280 490 265 540 270 580M115 420 145 440 150 520 120 560 75 570M60 500 90 490 90 420M210 210 215 270"/>
</g>
<g transform="translate(480 620) scale(.33333)">
<path class="c5" d="M145 110 215 82 245 90 250 140 285 160 270 195 200 190 170 200 165 260 105 272 88 230 88 180 130 150zM515 120 560 115 620 120 670 145 695 185 640 200 590 215 590 225 500 235 460 210 460 195 490 170z"/>
<path class="c0" d="M35 85 50 55 80 65 120 90 135 130 130 150 88 175 40 155zM225 25 290 20 375 40 370 60 340 75 290 70 250 90 215 80 220 50zM290 190 340 178 360 215 350 250 300 240zM460 225 500 235 590 225 605 250 615 265 550 305 525 285 460 275zM345 275 460 270 525 285 545 310 500 330 520 370 500 415 475 450 430 472 365 490 310 500 330 430 345 360 340 310z"/>
<path class="c2" d="M250 100 380 50 420 60 430 100 405 130 440 175 460 200 460 270 350 268 360 210 340 180 290 190 285 160 250 140z"/>
<path class="c4" d="M165 200 270 195 290 190 300 240 255 260 250 310 230 295 205 325 170 290 160 260zM318 325 345 320 340 430 320 500 328 532 283 528 310 450zM525 0 640 0 640 60 575 75 545 100 525 30z"/>
<path class="ln" d="M345 275 385 275 385 295 410 330 345 370M430 100 410 170 360 190M250 140 280 130 380 160M90 20 150 80 215 82M380 50 420 20M440 175 480 160M545 100 540 120M200 190 210 260 250 260M40 90 130 130M60 70 90 175"/>
</g>
<g transform="translate(700 620) scale(.33333)">
<path class="c5" d="M335 60 380 15 410 20 440 110 453 200 465 220 490 215 508 235 495 260 530 340 555 385 575 425 595 410 640 450 650 475 675 505 665 560 640 600 580 625 550 650 500 660 508 700 470 680 390 655 330 680 290 712 265 712 250 682 210 680 185 655 160 600 125 520 60 530 25 505 -20 500 -60 445 -90 425 -110 415 -102 460 -120 455 -130 415 -160 415 -140 380 -160 340 -115 305 -60 270 0 290 30 280 80 250 110 240 150 215 175 218 205 190 225 140 210 95 300 70zM520 225 535 222 538 235 528 236zM640 450 660 450 660 460 645 458zM575 405 588 395 590 415 580 425z"/>
<path class="c0" d="M120 -20 150 -50 220 -25 275 -80 265 -30 290 20 235 40 210 95 225 140 205 190 175 218 140 170 155 90 150 20zM290 70 335 60 345 90 385 140 385 185 350 175 305 150 280 110zM275 265 300 200 350 190 395 180 400 205 453 195 430 220 380 230 330 245zM243 220 265 220 265 240 245 245zM-70 215 0 200 35 190 75 215 85 235 60 255 30 275 -10 285 -60 265zM145 430 165 415 210 455 225 480 215 520 160 550 120 540 125 490 145 460zM125 520 160 550 160 600 112 578z"/>
<path class="c4" d="M30 120 90 125 125 180 150 215 115 240 60 200zM230 35 290 50 280 100 230 80z"/>
<path class="water" d="M78 262 88 238 104 230 120 230 138 245 138 280 128 320 125 385 112 355 100 320 78 295z"/>
<path class="ln" d="M45 0 55 80 30 120M0 150 30 120M90 125 150 100 155 90M385 185 390 230M485 220 490 340 460 370 450 480 400 520 330 550 280 580 270 640 190 630M120 330 118 450 150 410 200 380 225 370 240 330M240 330 320 380 360 350 450 360 460 390M290 370 300 430 260 470 225 480M300 430 360 420 450 470 520 480 550 440 545 400M340 490 390 520 450 520 580 525 590 560 575 625M450 520 465 600 440 660M280 580 250 560 215 520M530 480 510 525M125 385 60 360 0 350M60 360 40 450 60 530M-160 340 -60 370 -50 445M-75 290 -20 350 10 340M240 240 230 330M360 240 355 350M425 330 445 325 450 345 430 350zM470 250 400 300"/>
</g>
<g transform="translate(320 540) scale(.33333)">
<path class="c2" d="M255 98 285 100 280 140 330 145 380 185 390 235 340 245 320 240 290 280 280 320 250 315 220 290 225 240 200 207 135 210 100 178 145 178 210 175 230 150 258 135zM225 598 237 618 222 632 214 616z"/>
<path class="c1" d="M255 98 285 100 280 140 270 160 280 195 235 220 200 207 135 210 100 178 145 178 210 175 230 150 258 135z"/>
<path class="c0" d="M410 125 440 125 460 132 480 150 470 165 445 170 415 150zM432 806 442 803 448 815 440 822 430 815zM478-18 492-8 494-2 482-10z"/>
<path class="c3" d="M410 345 425 322 470 345 482 400 455 405 420 390 410 370zM40 420 70 412 100 470 130 460 120 420 150 400 190 380 240 355 270 375 300 380 315 350 370 370 410 400 458 440 440 455 385 480 350 530 320 555 265 545 250 575 190 575 145 580 125 585 90 575 55 545 30 525 60 510 75 505 60 470zM25 478 60 480 65 488 35 488zM375 345 395 355 390 370z"/>
<path class="c2" d="M160 385 200 380 240 440 140 470 130 420zM255 455 350 435 350 530 325 510 300 475zM130 582 185 570 150 600 145 640 130 655 120 650 140 600z"/>
<path class="c0" d="M140 480 175 470 215 435 255 450 250 490 262 560 230 570 190 575 145 580 125 540z"/>
<path class="c1" d="M200 380 240 355 300 400 320 350 368 370 350 430 270 450 240 440zM255 480 300 475 330 520 320 550 265 545zM95 655 125 650 130 700 85 742 68 712z"/>
<path class="ln" d="M270 160 280 195 300 190 310 215 335 220 332 245M225 240 260 240 290 280M182 470 182 575M350 430 340 470 300 475M90 470 75 520"/>
</g>
</g>
<g class="specks"><path d="M757 436h1M772 461h2M774 465h1M633 461h1M706 463l2 1M631 471l4 3M661 475v3M640 479h1M518 527h1M482 536l3 3M438 598l4 3M443 607l3 3M447 620l5 4M453 630l4 6M472 634h3M477 630h1M450 624h2M481 648h2M484 657h1M483 667v3M479 679l2 1M474 682h2M468 688l4 4M421 743l4 2M399 753h1M394 741v4M530 738l5 1M541 735l3 2M548 736l2 5M558 740h1M535 752l4 2M550 732l2 6M482 655l2 2M481 670l3 2M480 616l3 3M477 611h3M475 602l4 3M482 626l3 4M925 779h1M326 711h3M330 705l4-2M334 713l5 5M442 585l4 4M444 599l3 1M441 692l6-2M455 599l-2-2M490 607l-4 2M378 741l2 1"/></g>
<g marker-start="url(#pt)" marker-mid="url(#pt)" marker-end="url(#pt)" fill="none">
<polyline transform="translate(320 540) scale(.33333)" points="249,134 147,188 186,185 213,177 228,175 235,185 204,207 300,180 332,160 344,162 333,177 357,203 380,222 228,243 225,264 288,240 292,247 300,251 320,266 255,311 251,309 240,351 285,375 281,380 318,359 345,369 327,380 171,387 141,396 189,402 228,410 255,416 267,423 336,417 369,410 380,416 405,408 396,366 432,345 432,379 447,369 433,369 459,396 444,435 408,435 219,444 61,420 75,435 75,420 125,438 147,438 177,438 96,462 165,467 204,470 231,467 264,465 288,465 312,463 324,472 336,483 342,468 363,471 375,495 90,486 192,495 195,515 198,509 225,507 294,504 288,530 93,522 51,532 55,548 73,554 96,546 105,560 135,540 162,537 156,557 276,565 285,572 99,591 120,602 129,603 102,654 135,653 138,665 114,674 96,692 114,702 87,713"/>
<polyline transform="translate(470 430) scale(.33333)" points="360,180 492,138 549,162 435,174 432,178 462,201 489,210 499,210 501,225 522,237 543,204 561,204 573,206 594,210 588,219 630,192 627,132 645,153 639,146 636,156 681,120 657,222 639,234 657,234 318,225 324,222 342,237 370,246 360,245 384,252 264,264 291,276 234,285 240,300 252,306 306,300 366,285 354,285 363,303 385,324 405,324 216,330 282,330 267,336 315,332 333,336 145,330 163,327 154,331 111,351 112,362 111,378 138,351 162,360 192,351 210,357 222,363 246,345 258,348 254,363 381,354 408,354 453,279 473,281 480,288 435,297 513,300 537,276 561,264 585,275 453,330 483,351 516,336 564,351 600,348 597,354 663,321 684,339 624,378 456,372 507,372 489,399 459,405 354,393 390,411 285,378 285,393 270,411 315,410 315,426 186,432 246,435 225,450 258,456 90,435 75,444 60,468 81,482 69,486 108,462 120,467 144,468 135,495 117,492 99,503 171,504 162,513 141,522 192,516 54,531 78,540 65,558 75,558 99,567 96,575 126,576 114,588 84,597 60,597 174,540 180,552 156,567 168,591 246,498 273,492 303,471 315,483 336,495 360,498 351,465 369,474 300,519 336,522 378,522 258,531 276,534 351,549 333,555 309,558 288,564 381,570 396,576 261,582 219,594 297,597 318,591 411,474 426,465 429,420 420,434 414,540 459,540 456,564 447,594 519,432 543,443 540,462 549,417 597,435 507,471 504,525 498,546 534,573 492,591 576,537 618,594 645,405 690,405 660,456 651,480 684,447 636,528 678,543 678,582"/>
<polyline transform="translate(700 430) scale(.33333)" points="6,136 3,123 45,141 75,138 36,165 42,180 30,186 12,200 15,208 42,210 30,234 96,174 123,168 162,164 177,168 195,174 207,177 111,195 117,210 177,201 204,206 150,231 159,243 96,234 183,246 171,261 210,237 207,258 210,270 252,171 273,182 261,194 264,210 282,210 252,234 285,234 318,219 351,225 357,243 387,246 387,225 375,255 396,267 420,225 423,264 465,219 504,222 534,231 546,246 558,237 582,248 567,249 591,240 615,234 636,225 663,222 664,209 675,210 645,252 657,285 612,297 381,288 370,293 363,285 411,297 432,294 483,291 381,318 441,330 471,330 450,351 375,360 513,372 456,405 498,408 279,276 294,282 270,297 225,282 243,306 216,312 210,327 225,336 249,375 123,270 123,255 108,282 69,285 57,300 18,306 78,315 111,309 153,312 177,294 84,331 66,333 90,342 90,363 105,378 15,324 33,336 22,342 30,356 153,342 132,357 156,366 177,342 168,414 144,447 174,438 186,453 204,435 216,414 246,426 156,477 180,477 177,501 45,402 27,414 57,420 0,405 15,430 18,444 12,468 33,459 87,450 84,465 105,471 114,486 78,507 108,507 27,501 15,528 3,552 30,573 18,594 75,594 69,582 195,528 180,534 258,516 255,555 276,462 288,474 305,470 298,459 327,453 303,484 303,495 320,480 336,478 348,498 369,501 357,396 390,441 318,555 297,564 327,579 339,597 396,600 153,570 168,576 180,564 210,567 210,588 231,585 278,592 267,594"/>
<polyline transform="translate(480 620) scale(.33333)" points="138,51 159,51 198,45 174,36 180,69 168,63 231,48 258,45 243,78 327,51 351,39 279,84 291,73 306,75 300,99 279,117 309,120 336,102 357,117 366,135 327,135 321,153 342,150 393,90 420,66 429,54 423,114 438,144 507,72 537,45 600,51 639,39 474,99 462,107 519,102 507,112 495,120 594,96 635,102 628,106 618,105 651,107 660,75 477,171 393,159 531,159 593,147 585,147 627,150 639,165 618,171 594,180 69,69 84,67 48,88 60,99 81,87 105,84 111,66 60,117 60,129 102,135 57,147 78,163 78,150 96,171 141,162 153,87 147,108 201,114 225,108 180,138 213,159 204,147 234,135 255,135 258,156 201,177 273,195 201,201 177,212 189,228 111,213 105,204 156,228 243,210 264,222 279,210 315,201 347,180 336,180 312,228 300,240 234,243 186,255 111,252 138,261 147,276 186,287 168,285 210,282 204,300 204,310 213,312 249,279 252,300 249,309 261,261 342,264 363,222 357,237 381,234 396,204 390,210 423,288 426,324 390,333 342,309 354,312 330,321 318,351 327,366 321,417 312,456 300,504 168,390 177,390 408,369 384,396 411,408 405,393 459,378 480,378 495,384 462,432 366,444 342,474 378,474 531,252 585,258 594,216 606,228 621,210 654,204 612,267 597,285 564,303 645,276 633,303 639,327 507,342 552,345 534,369 555,381 573,372 597,378 627,387 573,423 612,420 639,456"/>
<polyline transform="translate(700 620) scale(.33333)" points="15,42 81,51 0,75 117,72 147,81 150,57 171,57 190,45 195,81 219,78 234,108 204,114 174,120 153,123 105,102 126,105 69,117 120,138 27,105 12,108 15,117 180,150 222,144 78,159 93,174 57,180 105,205 102,215 204,180 222,204 247,48 261,52 294,48 258,72 258,102 276,90 282,60 285,84 291,100 303,96 279,126 324,48 330,123 363,48 396,30 408,48 411,117 402,156 405,141 429,162 369,171 399,213 270,168 264,186 264,204 288,186 343,188 321,183 360,198 318,210 288,216 273,234 246,255 264,252 327,243 372,246 318,264 381,267 279,282 305,282 255,276 186,264 144,279 212,281 219,273 153,300 177,297 195,306 240,309 288,300 300,315 336,312 360,294 375,327 360,324 402,287 414,276 444,285 453,306 501,258 504,285 132,357 162,332 150,330 138,330 195,342 213,333 257,336 240,333 240,342 246,354 249,369 147,378 147,360 171,381 159,396 168,420 204,432 300,345 300,369 294,366 291,399 246,432 261,429 294,441 285,459 348,405 354,419 381,423 368,431 369,381 414,351 420,378 457,369 441,367 447,384 432,384 438,402 420,420 423,432 384,453 345,459 345,471 461,432 489,441 477,440 483,384 483,405 492,348 501,363 522,372 531,360 552,399 531,432 531,468 528,492 588,432 567,438 570,447 582,456 600,477 606,501 633,498 384,489 372,495 393,504 321,495 273,492 240,501 207,498 198,480 174,462 180,525 192,540 216,528 165,576 174,603 195,618 201,639 219,588 225,612 255,558 261,543 282,525 300,537 228,663 264,663 288,660 294,642 327,633 342,660 354,657 384,633 324,591 348,591 354,603 366,567 363,585 375,591 381,603 390,540 405,549 432,510 444,528 444,540 438,564 504,528 528,540 537,549 561,555 591,549 597,531 627,567 477,591 483,615 489,570 483,564 516,594 510,621 459,627 582,618 480,669 477,678 18,444 18,357 45,354 42,372 27,372 18,396 36,402 3,402 3,423 69,402 96,408 111,390 78,435 99,444 72,468 54,483 87,501 117,501 132,492 90,330 48,312 21,315 9,297 12,288 45,285 63,285 36,264 42,243 48,230 69,228 84,248"/>
</g>
</svg>
</main>
</div>
</body>
</html>
```
FILE: styles.css
```css
* { box-sizing: border-box; }

body {
  margin: 0;
  height: 100vh;
  display: flex;
  flex-direction: column;
  overflow: hidden;
  background: #fdfdfd;
  color: #000;
  font: 12px/18px "Open Sans", "Noto Sans", sans-serif;
}

.defs { position: absolute; width: 0; height: 0; }
.symbols { display: none; }

button {
  border: 0;
  padding: 0;
  background: none;
  font: inherit;
  color: inherit;
}

svg { display: block; flex: none; }

.menubar {
  display: flex;
  align-items: flex-end;
  height: 3px;
  overflow: hidden;
}
.menubar button { flex: none; padding: 0 5px; line-height: 16px; }

/* toolbars */
.toolbar {
  display: flex;
  align-items: center;
  height: 40px;
  padding-left: 7px;
  border-top: 1px solid #d0d0d0;
  border-bottom: 1px solid #b2b2b2;
  position: relative;
}
.toolbar.second { border-top: 0; border-bottom: 2px solid #b8b8b8; }
.toolbar::before {
  content: "";
  position: absolute;
  left: 0;
  top: 11px;
  width: 4px;
  height: 18px;
  background: radial-gradient(circle, #a8a8a8 1px, transparent 1px) 0 0 / 3px 3px;
}
.toolbar button {
  width: 33px;
  height: 32px;
  flex: none;
  display: flex;
  align-items: center;
  justify-content: center;
  position: relative;
}
.toolbar button > svg { width: 24px; height: 24px; }
.toolbar .pressed {
  border: 1px solid #a9a9a9;
  border-radius: 2px;
  background: #dcdcdc;
}
.toolbar .wide { width: 46px; gap: 4px; padding-left: 2px; }
.off > svg { opacity: .45; filter: grayscale(.5); }
.off .down { opacity: .6; }

.grip {
  width: 16px;
  height: 18px;
  flex: none;
  padding: 0 5px;
  background: radial-gradient(circle, #a8a8a8 1px, transparent 1px) 0 0 / 3px 3px content-box;
}
.sep { width: 7px; flex: none; height: 19px; border-left: 1px solid #c4c4c4; margin-left: 3px; margin-right: -3px; }

.down, .up { width: 0; height: 0; flex: none; border: 4px solid transparent; }
.down { border-top-color: #444; border-bottom: 0; }
.up { border-bottom-color: #444; border-top: 0; }
.drop-in::after {
  content: "";
  position: absolute;
  right: 2px;
  bottom: 5px;
  border: 3px solid transparent;
  border-top-color: #999;
  border-bottom: 0;
}

/* workspace */
.workspace { flex: 1; display: flex; min-height: 0; }

.sidebar { width: 46px; flex: none; display: flex; flex-direction: column; overflow: hidden; }
.sidebar button {
  height: 32px;
  flex: none;
  display: flex;
  align-items: center;
  gap: 6px;
  padding-left: 3px;
}
.sidebar .mid { padding-left: 9px; }
.sidebar svg { width: 24px; height: 24px; }
.hgrip {
  height: 16px;
  flex: none;
  padding: 8px 14px 2px;
  background: radial-gradient(circle, #a8a8a8 1px, transparent 1px) 0 0 / 3px 3px content-box;
}
.hgrip.first { height: 11px; padding-top: 3px; }

.docks {
  width: 268px;
  flex: none;
  display: flex;
  flex-direction: column;
  border-left: 1px solid #b0b0b0;
}
.panel { display: flex; flex-direction: column; min-height: 0; }
.browser { height: 328px; flex: none; }
.layers { flex: 1; }
.panel header {
  display: flex;
  align-items: center;
  gap: 3px;
  height: 18px;
  padding: 0 2px 0 4px;
}
.panel h2 { flex: 1; margin: 0; font-size: 12px; font-weight: 400; }
.wb {
  width: 11px;
  height: 11px;
  border: 1px solid #555;
  border-radius: 2px;
}
.wb svg { width: 9px; height: 9px; }

.ptools { display: flex; height: 31px; padding: 0 0 2px 3px; align-items: center; }
.ptools button { width: 25px; height: 24px; display: flex; align-items: center; justify-content: center; }
.ptools svg { width: 16px; height: 16px; }
.ptools .more { width: 38px; gap: 5px; }

.box { flex: 1; min-height: 0; border: 1px solid #b0b0b0; border-left-color: #c4c4c4; overflow: hidden; background: #fdfdfd; }
.scroller { display: flex; }
.scroller .tree { flex: 1; padding-top: 1px; }
.legend { border-bottom: 0; }

.tree { list-style: none; margin: 0; padding: 0; }
.tree li {
  position: relative;
  display: flex;
  align-items: center;
  height: 18px;
  padding-left: 6px;
  white-space: nowrap;
}
.tree label { display: flex; align-items: center; }
.tree svg { width: 16px; height: 16px; margin-right: 6px; }
.tw { width: 17px; flex: none; display: flex; }
.tw.shut::before { content: ""; border: 4px solid transparent; border-left: 5px solid #444; border-right: 0; margin-left: 2px; }
.tw.opened::before { content: ""; border: 4px solid transparent; border-top: 4px solid #333; border-bottom: 0; }

.bar { width: 14px; flex: none; display: flex; flex-direction: column; border-left: 1px solid #b8b8b8; }
.bar button { height: 14px; display: flex; align-items: center; justify-content: center; }
.bar button:first-child { border-bottom: 1px solid #b8b8b8; }
.bar button:last-child { border-top: 1px solid #b8b8b8; }
.track { flex: 187; }
.thumb { flex: 63; background: #e6e6e6; border-top: 1px solid #b8b8b8; }

.splitter, .vsplit {
  flex: none;
  background: radial-gradient(circle, #aaa 1px, transparent 1px) 0 0 / 3px 3px content-box;
}
.splitter { height: 7px; padding: 1px 125px 3px; }
.vsplit { width: 6px; padding: 438px 1px 400px 2px; }

/* legend */
input[type="checkbox"] {
  appearance: none;
  position: relative;
  width: 14px;
  height: 14px;
  flex: none;
  margin: 0 6px 0 0;
  border: 1px solid #b0b0b0;
  background: #fff;
}
input[type="checkbox"]:checked::after {
  content: "";
  position: absolute;
  left: 3px;
  top: 0;
  width: 5px;
  height: 9px;
  border: solid #000;
  border-width: 0 2px 2px 0;
  transform: rotate(38deg);
}
.point { width: 16px; margin-right: 6px; display: flex; justify-content: center; }
.point::before {
  content: "";
  width: 7px;
  height: 7px;
  border: 1px solid #4f7c48;
  border-radius: 50%;
  background: #84b573;
}
.sw { width: 18px; height: 18px; flex: none; margin-right: 6px; border: 1px solid rgba(35, 25, 25, .65); }
.sw.tan { width: 16px; height: 16px; background: #b3aa96; }
.hidden-layer { color: #808080; font-weight: 700; font-style: italic; }
.pale { color: #dcdcd8; }
.blue { color: #8cb3dc; }
.bar-end::after {
  content: "";
  position: absolute;
  right: 1px;
  top: 1px;
  width: 3px;
  height: 16px;
  background: #e6e6e6;
}
.classes li { padding-left: 43px; }
.tall li { height: 20px; }
.current { background: #0d80dc; color: #fff; }
.current b { text-decoration: underline; }
.tree .cursor { position: absolute; left: 119px; top: 10px; width: 12px; height: 20px; margin: 0; z-index: 1; }
.legend .tree:first-child { padding-top: 1px; }

i.c0 { background: #b6b3ac; }
i.c1 { background: #f3cbc9; }
i.c2 { background: #f49b95; }
i.c3 { background: #f3726c; }
i.c4 { background: #f64943; }
i.c5 { background: #b70c0b; }

/* map */
.canvas { flex: 1; min-width: 0; overflow: hidden; border-left: 1px solid #b0b0b0; }
.map { width: 1097px; height: 856px; }
.regions path { stroke: #3a2d2b; stroke-width: 3px; }
path.c0 { fill: #b6b3ac; }
path.c1 { fill: #f3cbc9; }
path.c2 { fill: #f49b95; }
path.c3 { fill: #f3726c; }
path.c4 { fill: #f64943; }
path.c5 { fill: #b70c0b; }
.regions path.ln { fill: none; stroke-width: 2px; }
path.water { fill: #fdfdfd; }
.specks path { fill: none; stroke: #3f3a36; stroke-width: 1px; }
```
